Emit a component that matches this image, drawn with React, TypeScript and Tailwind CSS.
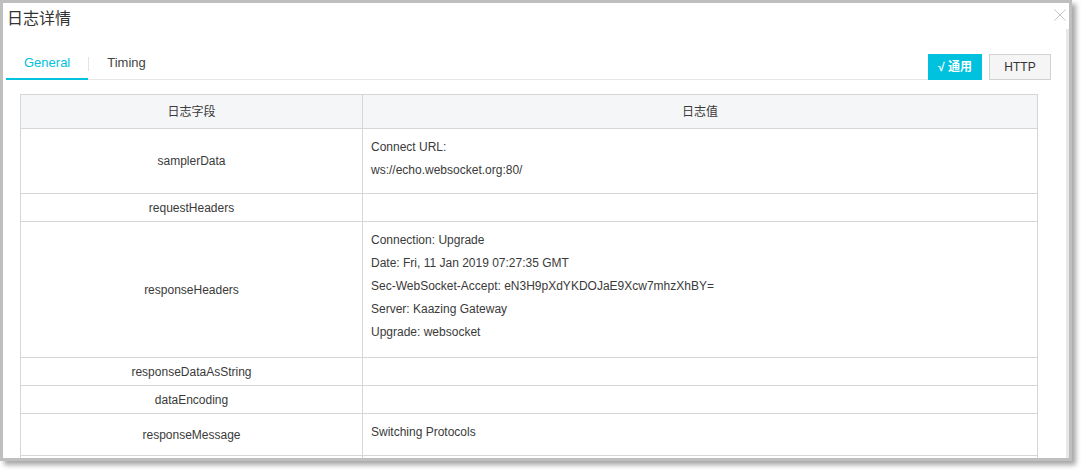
import React from 'react';

const rows: { key: string; h: string; lines: string[] }[] = [
  { key: 'samplerData', h: 'h-[65px]', lines: ['Connect URL:', 'ws://echo.websocket.org:80/'] },
  { key: 'requestHeaders', h: 'h-[28px]', lines: [] },
  {
    key: 'responseHeaders',
    h: 'h-[136px]',
    lines: [
      'Connection: Upgrade',
      'Date: Fri, 11 Jan 2019 07:27:35 GMT',
      'Sec-WebSocket-Accept: eN3H9pXdYKDOJaE9Xcw7mhzXhBY=',
      'Server: Kaazing Gateway',
      'Upgrade: websocket',
    ],
  },
  { key: 'responseDataAsString', h: 'h-[28px]', lines: [] },
  { key: 'dataEncoding', h: 'h-[28px]', lines: [] },
  { key: 'responseMessage', h: 'h-[42px]', lines: ['Switching Protocols'] },
  { key: '', h: 'h-[28px]', lines: [] },
];

export default function App() {
  return (
    <div className="w-[1081px] h-[470px] bg-white overflow-hidden font-['Liberation_Sans','Noto_Sans_CJK_SC',sans-serif]">
      <div className="relative w-[1072px] h-[461px] border-[3px] border-[#bfbfbf] bg-white shadow-[4px_4px_5px_rgba(0,0,0,0.35)] flex flex-col overflow-hidden">
        {/* scrollbar track */}
        <div className="absolute right-0 top-[26px] bottom-0 w-[3px] bg-[#e8e8e8]" />

        <button className="absolute right-[3px] top-[6px] w-[12px] h-[12px] text-[#c6c6c6]" aria-label="close">
          <svg viewBox="0 0 12 12" className="w-[12px] h-[12px]" fill="none" stroke="currentColor" strokeWidth="1">
            <path d="M0.5 0.5 L11.5 11.5 M11.5 0.5 L0.5 11.5" />
          </svg>
        </button>

        <h2 className="pl-[4px] pt-[5px] text-[16px] leading-[22px] text-[#333] font-normal">日志详情</h2>

        <div className="mt-[24px] flex items-end pl-[3px] pr-[18px]">
          <nav className="flex-1 flex items-start border-b border-[#e6e6e6]">
            <div className="px-[18px] pb-[6px] text-[13px] leading-[18px] text-[#00c1de] border-b-2 border-[#00c1de] -mb-px">
              General
            </div>
            <span className="mt-[3px] w-px h-[14px] bg-[#e3e3e3]" />
            <div className="px-[18px] pb-[6px] text-[13px] leading-[18px] text-[#444]">Timing</div>
          </nav>
          <button className="w-[54px] h-[26px] bg-[#00c1de] text-white text-[12px] font-bold">√ 通用</button>
          <button className="ml-[7px] w-[62px] h-[26px] bg-[#f5f5f5] border border-[#d2d2d2] text-[#333] text-[12px]">
            HTTP
          </button>
        </div>

        <div className="mt-[14px] ml-[17px] w-[1018px] border border-[#d6d6d6] text-[12px] text-[#3a3a3a]">
          <div className="flex h-[34px] bg-[#f5f6f8] border-b border-[#d6d6d6]">
            <div className="w-[342px] border-r border-[#d6d6d6] flex items-center justify-center">日志字段</div>
            <div className="flex-1 flex items-center justify-center">日志值</div>
          </div>
          {rows.map((r, i) => (
            <div key={i} className={`flex ${r.h} shrink-0 border-b border-[#d6d6d6]`}>
              <div className="w-[342px] shrink-0 border-r border-[#d6d6d6] flex items-center justify-center">{r.key}</div>
              <div className="flex-1 px-[8px] pt-[7px] leading-[23px]">
                {r.lines.map((l) => (
                  <div key={l}>{l}</div>
                ))}
              </div>
            </div>
          ))}
        </div>
      </div>
    </div>
  );
}
